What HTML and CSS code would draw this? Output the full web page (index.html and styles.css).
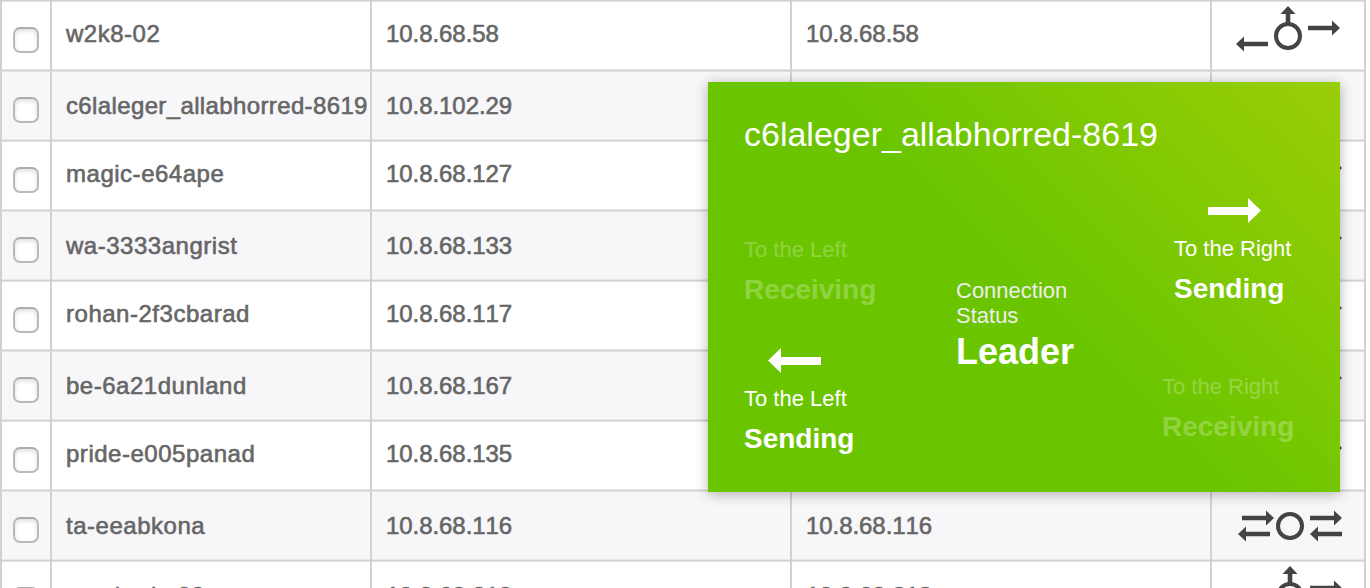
FILE: index.html
```html
<!DOCTYPE html>
<html lang="en">
<head>
<meta charset="utf-8">
<title>Connections</title>
<link rel="stylesheet" href="styles.css">
</head>
<body>
<svg class="defs" width="0" height="0">
  <symbol id="leader" viewBox="0 0 104 46">
    <path d="M0 38L8 30.5V35.700H32V40.300H8V45.5Z"/>
    <path d="M72 19.700H96V14.5L104 22L96 29.500V24.300H72Z"/>
    <path d="M52 0L59.500 8H54.300V18H49.700V8H44.500Z"/>
    <circle cx="52" cy="30" r="12" fill="none" stroke="#444" stroke-width="4"/>
  </symbol>
  <symbol id="chain" viewBox="0 0 104 32">
    <path d="M4 5.700H28V0.500L36 8L28 15.500V10.300H4Z"/>
    <path d="M0 24L8 16.500V21.700H32V26.300H8V31.500Z"/>
    <circle cx="52" cy="16" r="12" fill="none" stroke="#444" stroke-width="4"/>
    <path d="M72 5.700H96V0.500L104 8L96 15.500V10.300H72Z"/>
    <path d="M72 24L80 16.500V21.700H104V26.300H80V31.500Z"/>
  </symbol>
  <symbol id="sender" viewBox="0 0 104 32">
    <path d="M0 24L8 16.500V21.700H32V26.300H8V31.500Z"/>
    <circle cx="52" cy="16" r="12" fill="none" stroke="#444" stroke-width="4"/>
    <path d="M72 5.700H96V0.500L104 8L96 15.500V10.300H72Z"/>
  </symbol>
</svg>
<main class="screen">
  <div class="table">
    <div class="row"><div class="cell"><span class="check"></span></div><div class="cell name">w2k8-02</div><div class="cell">10.8.68.58</div><div class="cell">10.8.68.58</div><div class="cell"><svg class="leader"><use href="#leader"/></svg></div></div>
    <div class="row"><div class="cell"><span class="check"></span></div><div class="cell name name-long">c6laleger_allabhorred-8619</div><div class="cell">10.8.102.29</div><div class="cell"></div><div class="cell"></div></div>
    <div class="row"><div class="cell"><span class="check"></span></div><div class="cell name">magic-e64ape</div><div class="cell">10.8.68.127</div><div class="cell"></div><div class="cell"><svg class="chain"><use href="#sender"/></svg></div></div>
    <div class="row"><div class="cell"><span class="check"></span></div><div class="cell name">wa-3333angrist</div><div class="cell">10.8.68.133</div><div class="cell"></div><div class="cell"><svg class="chain"><use href="#sender"/></svg></div></div>
    <div class="row"><div class="cell"><span class="check"></span></div><div class="cell name">rohan-2f3cbarad</div><div class="cell">10.8.68.117</div><div class="cell"></div><div class="cell"><svg class="chain"><use href="#sender"/></svg></div></div>
    <div class="row"><div class="cell"><span class="check"></span></div><div class="cell name">be-6a21dunland</div><div class="cell">10.8.68.167</div><div class="cell"></div><div class="cell"><svg class="chain"><use href="#sender"/></svg></div></div>
    <div class="row"><div class="cell"><span class="check"></span></div><div class="cell name">pride-e005panad</div><div class="cell">10.8.68.135</div><div class="cell"></div><div class="cell"><svg class="chain"><use href="#sender"/></svg></div></div>
    <div class="row"><div class="cell"><span class="check"></span></div><div class="cell name">ta-eeabkona</div><div class="cell">10.8.68.116</div><div class="cell">10.8.68.116</div><div class="cell"><svg class="chain"><use href="#chain"/></svg></div></div>
    <div class="row"><div class="cell"><span class="check"></span></div><div class="cell name low">serahorbs08</div><div class="cell low">10.8.68.213</div><div class="cell low">10.8.68.213</div><div class="cell"><svg class="leader leader-end"><use href="#leader"/></svg></div></div>
  </div>
  <aside class="popup">
    <h1 class="title">c6laleger_allabhorred-8619</h1>
    <div class="columns">
      <div class="left">
        <div class="status faded"><span class="label">To the Left</span><strong class="state">Receiving</strong></div>
        <div class="status left-send"><svg class="arrow"><path d="M0 12.500L13 0V9H53V17H13V25Z"/></svg><span class="label">To the Left</span><strong class="state">Sending</strong></div>
      </div>
      <div class="center"><span class="center-label">Connection<br>Status</span><strong class="role">Leader</strong></div>
      <div class="right">
        <div class="status right-send"><svg class="arrow"><path d="M53 12.500L40 0V9H0V17H40V25Z"/></svg><span class="label">To the Right</span><strong class="state">Sending</strong></div>
        <div class="status faded right-receive"><span class="label">To the Right</span><strong class="state">Receiving</strong></div>
      </div>
    </div>
  </aside>
</main>
</body>
</html>
```
FILE: styles.css
```css
* { box-sizing: border-box; }
body { margin: 0; background: #fff; font-family: "Liberation Sans", Arial, sans-serif; }
.defs { position: absolute; }
.screen { position: relative; width: 1370px; height: 588px; overflow: hidden; }
.table { width: 1366px; border-left: 2px solid #d2d2d2; }
.row { display: grid; grid-template-columns: 50px 320px 420px 420px 154px; height: 70px; background: linear-gradient(#d2d2d2 1px, #e2e2e2 1px, #e2e2e2 2px, transparent 2px, transparent 69px, #e8e8e8 69px); }
.row:nth-child(even) { background-color: #f7f7fa; }
.cell { border-right: 2px solid #d2d2d2; padding: 20px 0 0 14px; line-height: 28px; font-size: 24px; font-kerning: none; letter-spacing: -0.06px; color: #666; -webkit-text-stroke: 0.6px #666; white-space: nowrap; overflow: hidden; }
.name { letter-spacing: 0.52px; }
.name-long { letter-spacing: 0.37px; }
.low { padding-top: 22px; }
.row:nth-child(even) .cell { padding-top: 22px; }
.cell:first-child, .row:nth-child(even) .cell:first-child { padding: 27px 0 0 11px; }
.cell:last-child, .row:nth-child(even) .cell:last-child { padding: 0; }
.check { display: block; width: 26px; height: 26px; border: 2px solid #bababa; border-top-color: #acacac; border-radius: 7px; background: #fff; box-shadow: inset 0 2px 4px #ddd; }
.leader, .chain { display: block; fill: #444; }
.leader { width: 104px; height: 46px; margin: 6px 0 0 24px; }
.leader-end { margin-left: 26px; }
.chain { width: 104px; height: 32px; margin: 20px 0 0 26px; }
.popup { position: absolute; left: 708px; top: 82px; width: 632px; height: 410px; padding: 32px 36px 0; color: #fff; background: linear-gradient(45deg, #6ac500 50%, #9ace06); box-shadow: 0 2px 12px rgba(0,0,0,.3); }
.title { margin: 0 0 1px; font-size: 34px; line-height: 40px; font-weight: 400; white-space: nowrap; }
.columns { display: grid; grid-template-columns: 212px 206px 150px; }
.status { display: flex; flex-direction: column; white-space: nowrap; }
.label { font-size: 22px; line-height: 26px; }
.state { font-size: 28px; line-height: 32px; margin-top: 11px; }
.faded { opacity: .25; }
.left { padding-top: 82px; }
.left-send { margin-top: 42px; }
.arrow { width: 53px; height: 25px; margin: 0 0 13px 24px; fill: #fff; }
.right { padding-top: 43px; }
.right-send { padding-left: 12px; }
.right-send .arrow { margin-left: 34px; }
.right-receive { margin-top: 69px; }
.center { padding-top: 123px; display: flex; flex-direction: column; }
.center-label { font-size: 22px; line-height: 25px; color: #ededed; }
.role { font-size: 36px; line-height: 40px; margin-top: 4px; }
```
